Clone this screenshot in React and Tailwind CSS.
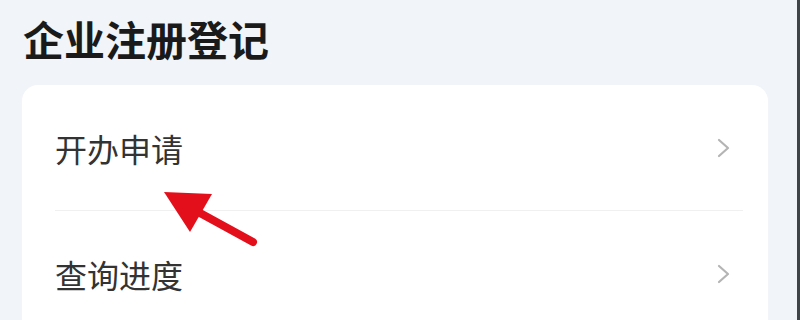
import React from 'react';

const items = ['开办申请', '查询进度'];

function Chevron() {
  return (
    <svg width="16" height="22" viewBox="0 0 16 22" className="flex-shrink-0">
      <polyline points="3,3 12,11 3,19" fill="none" stroke="#b4b4b4" strokeWidth="2.2" strokeLinecap="round" strokeLinejoin="round" />
    </svg>
  );
}

// ── Red pointer arrow overlay ─────────────────────────────────
function Pointer() {
  return (
    <svg className="absolute left-0 top-0 pointer-events-none" width="800" height="320" viewBox="0 0 800 320">
      <line x1="200" y1="213" x2="253" y2="242" stroke="#e3101c" strokeWidth="8" strokeLinecap="round" />
      <polygon points="164,192 212,194 190,232" fill="#e3101c" />
    </svg>
  );
}

export default function App() {
  return (
    <div
      className="relative w-[800px] h-[320px] overflow-hidden bg-[#f1f4f8] flex"
      style={{ fontFamily: '"Noto Sans CJK SC", "Noto Sans", sans-serif' }}
    >
      <div className="flex-1 flex flex-col pl-[22px] pr-[29px] pt-[18px]">
        <h1 className="pl-[1px] text-[41px] leading-none font-bold text-[#1a1a1a]">企业注册登记</h1>
        <div className="mt-[26px] bg-white rounded-2xl flex-1 rounded-b-none">
          {items.map((label, i) => (
            <div key={label}>
              <div className="h-[125px] flex items-center justify-between pl-[33px] pr-[36px]">
                <span className="text-[32px] leading-none text-[#333333]">{label}</span>
                <Chevron />
              </div>
              {i === 0 && <div className="ml-[33px] mr-[25px] h-px bg-[#f0f0f0]" />}
            </div>
          ))}
        </div>
      </div>
      <div className="w-[3px] flex-shrink-0 bg-[#3f4448]" />
      <Pointer />
    </div>
  );
}
